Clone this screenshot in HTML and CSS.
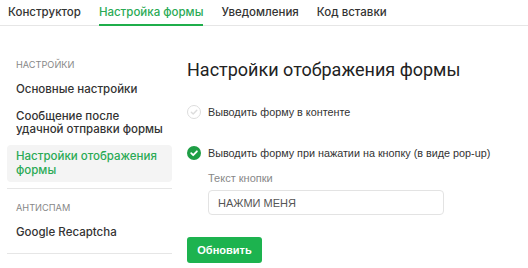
FILE: index.html
```html
<!DOCTYPE html>
<html lang="ru">
<head>
    <meta charset="UTF-8">
    <title>Настройка формы</title>
    <link rel="stylesheet" href="styles.css">
</head>
<body>
    <div class="tabs">
        <a href="#">Конструктор</a>
        <a href="#" class="active">Настройка формы</a>
        <a href="#">Уведомления</a>
        <a href="#">Код вставки</a>
    </div>
    <div class="page">
        <div class="sidebar">
            <div class="side-title">НАСТРОЙКИ</div>
            <a href="#" class="side-item">Основные настройки</a>
            <a href="#" class="side-item">Сообщение после удачной отправки формы</a>
            <a href="#" class="side-item active">Настройки отображения формы</a>
            <div class="side-divider"></div>
            <div class="side-title">АНТИСПАМ</div>
            <a href="#" class="side-item">Google Recaptcha</a>
            <div class="side-divider last"></div>
        </div>
        <div class="content">
            <h2>Настройки отображения формы</h2>
            <label class="option">
                <span class="check">
                    <svg width="14" height="14" viewBox="0 0 14 14"><circle cx="7" cy="7" r="6.5" fill="#fff" stroke="#dcdcdc"/><path d="M4.3 7.2l1.9 1.9 3.6-3.8" fill="none" stroke="#dcdcdc" stroke-width="1.4" stroke-linecap="round" stroke-linejoin="round"/></svg>
                </span>
                Выводить форму в контенте
            </label>
            <label class="option checked">
                <span class="check">
                    <svg width="14" height="14" viewBox="0 0 14 14"><circle cx="7" cy="7" r="7" fill="#1e9e45"/><path d="M4.2 7.2l2 2 3.7-3.9" fill="none" stroke="#fff" stroke-width="1.8" stroke-linecap="round" stroke-linejoin="round"/></svg>
                </span>
                Выводить форму при нажатии на кнопку (в виде pop-up)
            </label>
            <div class="field">
                <label for="btn-text">Текст кнопки</label>
                <input type="text" id="btn-text" value="НАЖМИ МЕНЯ">
            </div>
            <button class="btn">Обновить</button>
        </div>
    </div>
</body>
</html>
```

FILE: styles.css
```css
body {
    margin: 0;
    font-family: Inter, "Noto Sans", sans-serif;
    color: #333;
    background: #fff;
}
.tabs {
    display: flex;
    gap: 18px;
    padding: 0 8px;
    border-bottom: 1px solid #e6e6e6;
}
.tabs a {
    display: block;
    padding: 5px 0;
    line-height: 14px;
    font-size: 11.5px;
    font-weight: 500;
    color: #333;
    text-decoration: none;
    border-bottom: 2px solid transparent;
    margin-bottom: -1px;
}
.tabs a.active {
    color: #2aaa55;
    border-bottom-color: #1fae4b;
}
.page {
    display: flex;
    padding-top: 33px;
}
.sidebar {
    width: 165px;
    margin-left: 7px;
    flex-shrink: 0;
}
.side-title {
    font-size: 9.2px;
    line-height: 12px;
    color: #888;
    padding: 0 9px;
    margin-bottom: 6.5px;
}
.side-item {
    display: block;
    padding: 5px 4px 5px 9px;
    margin-bottom: 3.5px;
    font-size: 11.5px;
    font-weight: 500;
    line-height: 13.5px;
    color: #333;
    text-decoration: none;
    border-radius: 4px;
}
.side-item.active {
    background: #f4f4f4;
    color: #2aaa55;
}
.side-divider {
    height: 1px;
    background: #e6e6e6;
    margin: 6px 0 13px;
}
.side-divider.last {
    margin-top: 9px;
}
.content {
    margin-left: 15px;
    margin-top: -2px;
    font-family: "Liberation Sans", Arial, sans-serif;
}
.content h2 {
    font-family: Roboto, sans-serif;
    font-weight: 400;
    font-size: 18px;
    color: #222;
    margin: 2px 0 25px;
}
.option {
    display: flex;
    align-items: center;
    gap: 7px;
    font-size: 10.8px;
    color: #333;
    margin-bottom: 27px;
}
.check {
    display: flex;
}
.field {
    margin-left: 21px;
    margin-top: -15px;
}
.field label {
    display: block;
    font-size: 11px;
    color: #888;
    margin-bottom: 6px;
}
.field input {
    width: 236px;
    height: 25px;
    box-sizing: border-box;
    border: 1px solid #e3e3e3;
    border-radius: 4px;
    padding: 0 9px;
    font-family: "Liberation Sans", Arial, sans-serif;
    font-size: 11px;
    color: #555;
}
.btn {
    margin-top: 22px;
    background-color: #1db34f;
    color: #fff;
    border: none;
    border-radius: 3px;
    width: 75px;
    height: 26px;
    font-family: "Liberation Sans", Arial, sans-serif;
    font-size: 11px;
    font-weight: bold;
    cursor: pointer;
}
```
